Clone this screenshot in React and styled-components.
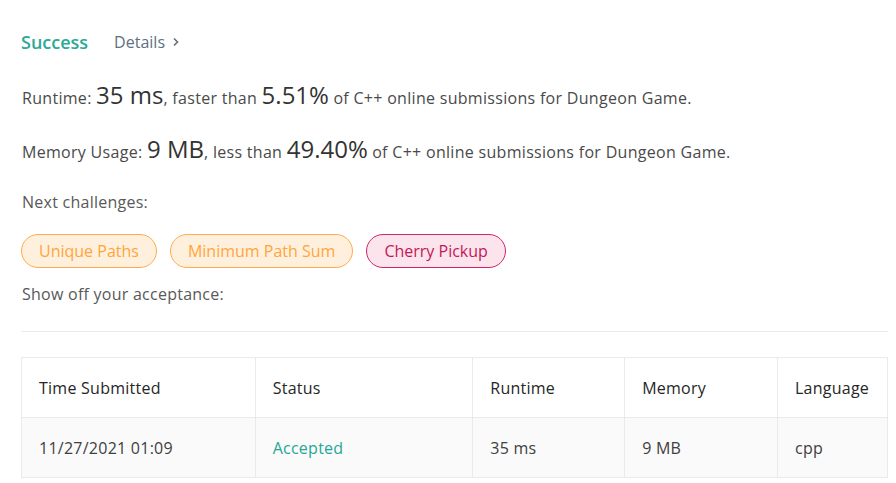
import styled, { createGlobalStyle } from "styled-components";

const GlobalStyle = createGlobalStyle`
  body {
    margin: 0;
    background: #fff;
    font-family: "Open Sans", "Noto Sans", sans-serif;
  }
`;

const Page = styled.div`
  width: 896px;
  height: 483px;
  overflow: hidden;
  box-sizing: border-box;
  padding: 30px 8px 0 21px;
`;

const Header = styled.div`
  display: flex;
  align-items: center;
  height: 24px;
  gap: 26px;
`;

const Status = styled.span`
  font-size: 18px;
  font-weight: 600;
  color: #2aa996;
`;

const DetailsLink = styled.span`
  display: flex;
  align-items: center;
  gap: 7px;
  font-size: 16px;
  color: #607080;
`;

const Stat = styled.p`
  margin: ${(p) => p.$top}px 0 0 1px;
  font-size: 16px;
  letter-spacing: 0.3px;
  color: #4a4a4a;
  height: 30px;
  line-height: 30px;
`;

const Big = styled.span`
  font-size: 24px;
  letter-spacing: 0;
  color: #333;
`;

const Label = styled.p`
  margin: ${(p) => p.$top}px 0 0 1px;
  font-size: 16px;
  letter-spacing: 0.25px;
  color: #595959;
  line-height: 22px;
`;

const Tags = styled.div`
  display: flex;
  gap: 13px;
  margin-top: 21px;
`;

const Tag = styled.span`
  display: inline-flex;
  align-items: center;
  height: 34px;
  box-sizing: border-box;
  padding: 0 17px;
  border-radius: 17px;
  font-size: 16px;
  border: 1px solid ${(p) => (p.$hard ? "#d0246e" : "#ffac4a")};
  background: ${(p) => (p.$hard ? "#fce4ec" : "#fff0de")};
  color: ${(p) => (p.$hard ? "#c2185b" : "#ffa53a")};
`;

const Divider = styled.hr`
  border: none;
  border-top: 1px solid #eaeaea;
  margin: 26px 0 0 0;
`;

const Table = styled.table`
  margin-top: 25px;
  width: 867px;
  border-collapse: collapse;
  font-size: 16px;
  letter-spacing: 0.25px;
`;

const Th = styled.th`
  text-align: left;
  font-weight: 400;
  color: #262626;
  height: 60px;
  padding: 0 17px;
  border: 1px solid #eaeaea;
  width: ${(p) => p.$w}px;
  box-sizing: border-box;
`;

const Td = styled.td`
  height: 59px;
  padding: 0 17px;
  border: 1px solid #eaeaea;
  background: #fafafa;
  color: ${(p) => (p.$ok ? "#1ea896" : "#404040")};
`;

const Chevron = () => (
  <svg width="8" height="10" viewBox="0 0 8 10">
    <path d="M2 1.5 L5.5 5 L2 8.5" fill="none" stroke="#607080" strokeWidth="1.6" />
  </svg>
);

export default function App() {
  return (
    <Page>
      <GlobalStyle />
      <Header>
        <Status>Success</Status>
        <DetailsLink>
          Details <Chevron />
        </DetailsLink>
      </Header>
      <Stat $top={26}>
        Runtime: <Big>35 ms</Big>, faster than <Big>5.51%</Big> of C++ online submissions for Dungeon Game.
      </Stat>
      <Stat $top={24}>
        Memory Usage: <Big>9 MB</Big>, less than <Big>49.40%</Big> of C++ online submissions for Dungeon Game.
      </Stat>
      <Label $top={27}>Next challenges:</Label>
      <Tags>
        <Tag>Unique Paths</Tag>
        <Tag>Minimum Path Sum</Tag>
        <Tag $hard>Cherry Pickup</Tag>
      </Tags>
      <Label $top={15}>Show off your acceptance:</Label>
      <Divider />
      <Table>
        <thead>
          <tr>
            <Th $w={234}>Time Submitted</Th>
            <Th $w={218}>Status</Th>
            <Th $w={152}>Runtime</Th>
            <Th $w={153}>Memory</Th>
            <Th $w={110}>Language</Th>
          </tr>
        </thead>
        <tbody>
          <tr>
            <Td>11/27/2021 01:09</Td>
            <Td $ok>Accepted</Td>
            <Td>35 ms</Td>
            <Td>9 MB</Td>
            <Td>cpp</Td>
          </tr>
        </tbody>
      </Table>
    </Page>
  );
}
